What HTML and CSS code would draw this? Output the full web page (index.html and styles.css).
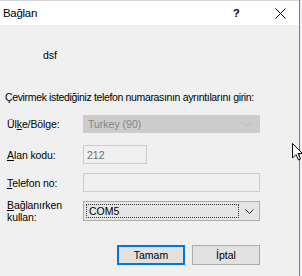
FILE: index.html
```html
<!DOCTYPE html>
<html lang="tr">
<head>
    <meta charset="UTF-8">
    <title>Bağlan</title>
    <link rel="stylesheet" href="styles.css">
</head>
<body>

    <div class="window">
        <div class="titlebar">
            <span class="title">Bağlan</span>
            <span class="help">?</span>
            <span class="close">
                <svg width="11" height="11" viewBox="0 0 11 11">
                    <path d="M0.5 0.5 L10.5 10.5 M10.5 0.5 L0.5 10.5" stroke="#000" stroke-width="1" fill="none"/>
                </svg>
            </span>
        </div>

        <div class="content">
            <div class="entry-name">dsf</div>
            <p class="prompt">Çevirmek istediğiniz telefon numarasının ayrıntılarını girin:</p>

            <div class="form">
                <div class="row row-country">
                    <label>Ül<u>k</u>e/Bölge:</label>
                    <div class="select disabled">
                        <span>Turkey (90)</span>
                        <svg class="caret" width="9" height="5" viewBox="0 0 9 5"><path d="M0.5 0.5 L4.5 4.5 L8.5 0.5" stroke="#bdbdbd" fill="none"/></svg>
                    </div>
                </div>
                <div class="row row-area">
                    <label><u>A</u>lan kodu:</label>
                    <div class="input short disabled">212</div>
                </div>
                <div class="row row-phone">
                    <label><u>T</u>elefon no:</label>
                    <div class="input disabled"></div>
                </div>
                <div class="row row-device">
                    <label><u>B</u>ağlanırken<br>kullan:</label>
                    <div class="select combo">
                        <span class="focus">COM5</span>
                        <svg class="caret" width="9" height="5" viewBox="0 0 9 5"><path d="M0.5 0.5 L4.5 4.5 L8.5 0.5" stroke="#333" fill="none"/></svg>
                    </div>
                </div>
            </div>

            <div class="buttons">
                <button class="default">Tamam</button>
                <button>İptal</button>
            </div>
        </div>
    </div>

    <!-- fare imleci -->
    <svg class="cursor" width="11" height="18" viewBox="0 0 11 18">
        <path d="M0.5 0.5 L0.5 15 L4 11.5 L6.5 17 L8.5 16 L6 10.5 L10.5 10.5 Z" fill="#fff" stroke="#000" stroke-width="1"/>
    </svg>

</body>
</html>
```

FILE: styles.css
```css
* {
    margin: 0;
    padding: 0;
    box-sizing: border-box;
}

body {
    width: 302px;
    height: 276px;
    overflow: hidden;
    background-color: #eef2f7;
    font-family: 'Liberation Sans', Arial, sans-serif;
    font-size: 10.5px;
    color: #000;
    position: relative;
}

.window {
    width: 300px;
    height: 276px;
    border-right: 1px solid #3c86d6;
    background-color: #f0f0f0;
}

.titlebar {
    height: 25px;
    background-color: #fff;
    border-top: 1px solid #d6d6d6;
    display: flex;
    align-items: center;
    padding-left: 3px;
}

.title {
    font-size: 11.5px;
    flex: 1;
    letter-spacing: -0.3px;
}

.help {
    font-size: 11px;
    font-weight: bold;
    width: 39px;
    margin-right: 3px;
}

.close {
    width: 24px;
    display: flex;
    align-items: center;
    margin-top: 1px;
}

.content {
    padding: 0 0 0 5px;
}

.entry-name {
    margin-left: 38px;
    padding-top: 24px;
    height: 36px;
    line-height: 12px;
}

.prompt {
    margin-top: 30px;
    line-height: 12px;
    letter-spacing: -0.35px;
}

.form {
    display: flex;
    flex-direction: column;
    margin-top: 12px;
}

.row {
    display: flex;
    align-items: center;
}

.row label {
    width: 78px;
    padding-left: 2px;
    line-height: 12px;
    letter-spacing: -0.1px;
}

.row-country { height: 18px; }
.row-area { height: 19px; margin-top: 12px; }
.row-phone { height: 19px; margin-top: 9px; }
.row-device { height: 20px; margin-top: 9px; }

.select, .input {
    width: 177px;
    height: 100%;
    display: flex;
    align-items: center;
    padding-left: 5px;
}

.input.short {
    width: 64px;
    padding-left: 3px;
}

.select.disabled {
    background-color: #cccccc;
    color: #858585;
    justify-content: space-between;
    padding-right: 9px;
}

.input.disabled {
    background-color: #f0f0f0;
    border: 1px solid #cccccc;
    color: #6d6d6d;
}

.select.combo {
    background-color: #e5e5e5;
    border: 1px solid #adadad;
    padding: 2px;
    justify-content: space-between;
}

.select.combo .focus {
    flex: 1;
    height: 100%;
    border: 1px dotted #333;
    padding-left: 2px;
    display: flex;
    align-items: center;
    margin-right: 6px;
}

.select.combo .caret {
    margin-right: 3px;
}

.buttons {
    display: flex;
    gap: 7px;
    margin-top: 24px;
    padding-left: 112px;
}

button {
    width: 68px;
    height: 20px;
    background-color: #e1e1e1;
    border: 1px solid #adadad;
    font-family: 'Liberation Sans', Arial, sans-serif;
    font-size: 10.5px;
    color: #000;
}

button.default {
    border: 2px solid #0078d7;
}

.cursor {
    position: absolute;
    left: 292px;
    top: 143px;
}
```
